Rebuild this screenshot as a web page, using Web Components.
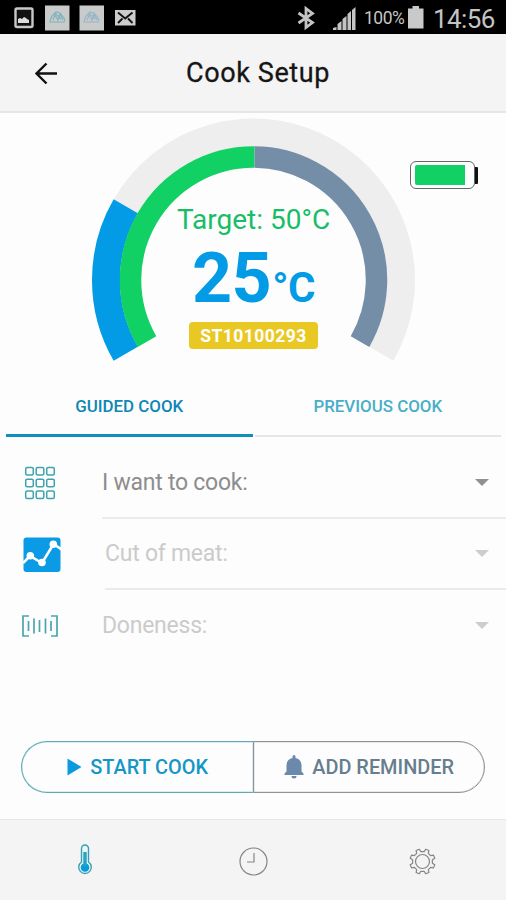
<!DOCTYPE html>
<html lang="en">
<head>
<meta charset="utf-8">
<title>Cook Setup</title>
<style>
  body {
    margin: 0;
    width: 506px;
    height: 900px;
    overflow: hidden;
    background: #fdfdfd;
    font-family: Roboto, "Liberation Sans", sans-serif;
    --blue: #039be5;
    --green: #12d164;
    --slate: #758ea8;
    --bar: #f4f4f4;
  }
</style>
</head>
<body>
<cook-app></cook-app>

<script>
class StatusBar extends HTMLElement {
  constructor() {
    super();
    this.attachShadow({ mode: 'open' });
    this.shadowRoot.innerHTML = `
      <style>
        :host {
          display: flex;
          align-items: flex-start;
          justify-content: space-between;
          height: 34px;
          background: #000;
          color: #c4c4c4;
        }
        svg { display: block; flex: none; }
        .time { font-size: 26px; line-height: 38px; letter-spacing: -0.6px; width: 73px; }
        .percent { font-size: 17.5px; line-height: 36px; width: 43px; letter-spacing: -0.5px; white-space: nowrap; }
        .right { display: flex; }
      </style>
      <svg width="150" height="34" viewBox="0 0 150 34">
        <rect x="15.500" y="8.500" width="17" height="18.500" rx="1.500" fill="#111" stroke="#c8c8c8" stroke-width="2.400"/>
        <path d="M18 23v-4l2-1 2 1 2-2 2 1 1 1 2 1v3z" fill="#ddd"/>
        <rect x="45" y="5.500" width="24.500" height="25" fill="#c9cbcb"/>
        <path d="M49 22h16M50 21l2-5 4-4 4 1 4 5 1 3M53 20l2-5 3 5 2-6 3 6M55 13l6 6" fill="none" stroke="#7fb3bb" stroke-width="1.200"/>
        <rect x="79.500" y="5.500" width="24.500" height="25" fill="#c9cbcb"/>
        <path d="M83 22h16M84 21l2-5 4-4 4 1 4 5 1 3M87 20l2-5 3 5 2-6 3 6M89 13l6 6" fill="none" stroke="#93b5c8" stroke-width="1.200"/>
        <rect x="115" y="10" width="20.500" height="15.500" fill="#ccc"/>
        <path d="M118 12.500l7.200 6 7.300-6M118 23l4.500-4.500M132.500 23l-4.500-4.500" fill="none" stroke="#111" stroke-width="1.900"/>
      </svg>
      <div class="right">
        <svg width="69" height="34" viewBox="296 0 69 34">
          <path d="M299.500 13l14 9.500-6.500 5v-19l6.500 5-14 9.500" fill="none" stroke="#c4c4c4" stroke-width="2.800"/>
          <path d="M334 30v-2l3.500-1v3zM338.500 30v-6l4-3v9zM343.500 30v-11l4-3v14zM348.500 30v-16l3.500-3v19zM353 30v-20l3.500-3v23z" fill="#c4c4c4"/>
        </svg>
        <span class="percent">100%</span>
        <svg width="26" height="34" viewBox="408 0 26 34">
          <path d="M409 8.500h4.500V6h6.500v2.500h4.500v20H409z" fill="#c9c9c9"/>
        </svg>
        <span class="time">14:56</span>
      </div>
    `;
  }
}

class AppHeader extends HTMLElement {
  constructor() {
    super();
    this.attachShadow({ mode: 'open' });
    this.shadowRoot.innerHTML = `
      <style>
        :host {
          display: grid;
          grid-template-columns: 90px 1fr 80px;
          align-items: center;
          height: 79px;
          box-sizing: border-box;
          padding-top: 2px;
          background: var(--bar);
          border-bottom: 2px solid #e6e6e6;
          color: #161616;
        }
        svg { display: block; margin-left: 34px; }
        h1 {
          margin: 0;
          font-size: 27px;
          font-weight: 400;
          letter-spacing: 0.6px;
          line-height: 33px;
          text-align: center;
          -webkit-text-stroke: 0.3px #161616;
        }
      </style>
      <svg width="24" height="24" viewBox="0 0 24 24" fill="none" stroke="#111" stroke-width="2.400">
        <path d="M23 11.500H2.500M12.500 1.500L2.500 11.500l10 10"/>
      </svg>
      <h1><slot></slot></h1>
    `;
  }
}

class TemperatureGauge extends HTMLElement {
  constructor() {
    super();
    this.attachShadow({ mode: 'open' });
  }

  // arc around the centre of the dial, angles in degrees clockwise from the right
  arc(radius, from, to) {
    const point = (deg) => {
      const rad = deg * Math.PI / 180;
      return `${161.5 + radius * Math.cos(rad)} ${162 + radius * Math.sin(rad)}`;
    };
    const large = to - from > 180 ? 1 : 0;
    return `M${point(from)}A${radius} ${radius} 0 ${large} 1 ${point(to)}`;
  }

  connectedCallback() {
    this.shadowRoot.innerHTML = `
      <style>
        :host { display: grid; width: 324px; height: 244px; }
        svg, .info { grid-area: 1 / 1; }
        path { fill: none; }
        .info { display: flex; flex-direction: column; align-items: center; width: 323px; }
        .target { margin-top: 85px; font-size: 28px; line-height: 34px; color: #18bd68; white-space: nowrap; }
        .value { display: flex; align-items: baseline; height: 76px; margin-top: 3px; font-size: 70px; line-height: 76px; font-weight: 700; letter-spacing: -0.5px; color: var(--blue); }
        .value small { font-size: 42px; margin-left: 1px; letter-spacing: -0.5px; }
        .serial {
          width: 129px;
          height: 27px;
          margin-top: 6px;
          border-radius: 4px;
          background: #eac824;
          color: #fff;
          font-size: 17.5px;
          font-weight: 700;
          letter-spacing: 0.45px;
          line-height: 28px;
          text-align: center;
        }
      </style>
      <svg width="324" height="244" viewBox="0 0 324 244">
        <path d="${this.arc(147.5, 210, 390)}" stroke="#eee" stroke-width="28"/>
        <path d="${this.arc(147.5, 150, 210)}" stroke="var(--blue)" stroke-width="28"/>
        <path d="${this.arc(123, 150, 270.5)}" stroke="var(--green)" stroke-width="21.500"/>
        <path d="${this.arc(123, 270.5, 390)}" stroke="var(--slate)" stroke-width="21.500"/>
      </svg>
      <div class="info">
        <div class="target">Target: ${this.getAttribute('target')}°C</div>
        <div class="value">${this.getAttribute('value')}<small>°C</small></div>
        <div class="serial">${this.getAttribute('serial')}</div>
      </div>
    `;
  }
}

class BatteryLevel extends HTMLElement {
  constructor() {
    super();
    this.attachShadow({ mode: 'open' });
    this.shadowRoot.innerHTML = `
      <style>
        :host { display: flex; align-items: center; width: 68px; height: 28px; }
        .case { box-sizing: border-box; width: 65px; height: 28px; padding: 3px 4px; border: 1.5px solid #666; border-radius: 6px; background: #fff; }
        .level { width: 50px; height: 20px; border-radius: 2px 0 0 2px; background: var(--green); }
        .tip { width: 2.500px; height: 17px; background: #111; border-radius: 0 1px 1px 0; }
      </style>
      <div class="case"><div class="level"></div></div>
      <div class="tip"></div>
    `;
  }
}

class CookTab extends HTMLElement {
  constructor() {
    super();
    this.attachShadow({ mode: 'open' });
    this.shadowRoot.innerHTML = `
      <style>
        :host {
          display: flex;
          flex: 1;
          box-sizing: border-box;
          height: 60px;
          align-items: center;
          justify-content: center;
          border-bottom: 2px solid #e6e6e6;
          color: #48aec8;
          font-size: 16.9px;
          font-weight: 500;
          white-space: nowrap;
        }
        :host([active]) { color: #0d87b5; border-bottom: 3px solid #0e8fc0; }
      </style>
      <slot></slot>
    `;
  }
}

class SelectRow extends HTMLElement {
  constructor() {
    super();
    this.attachShadow({ mode: 'open' });
    this.shadowRoot.innerHTML = `
      <style>
        :host {
          display: flex;
          height: 71.5px;
          align-items: stretch;
          color: #8d8d8d;
          --caret: #909090;
        }
        :host([disabled]) { color: #cbcbcb; --caret: #cdcdcd; }
        .icon { width: 80px; display: flex; align-items: center; justify-content: center; }
        .field {
          display: flex;
          flex: 1;
          box-sizing: border-box;
          align-items: center;
          justify-content: space-between;
          margin-left: var(--line-start, 22px);
          padding: 1px 17px 0 0;
          border-bottom: 2px solid #ebebeb;
          font-size: 23px;
          letter-spacing: -0.25px;
        }
        :host([last]) .field { border-bottom-color: transparent; }
        .caret { border: 7px solid transparent; border-top-color: var(--caret); border-bottom: 0; }
      </style>
      <div class="icon"><slot name="icon"></slot></div>
      <div class="field"><slot></slot><span class="caret"></span></div>
    `;
  }
}

class ActionButton extends HTMLElement {
  constructor() {
    super();
    this.attachShadow({ mode: 'open' });
    this.shadowRoot.innerHTML = `
      <style>
        :host {
          display: flex;
          box-sizing: border-box;
          height: 52px;
          align-items: center;
          justify-content: center;
          gap: 8px;
          border: 1.500px solid #8a9499;
          border-radius: 0 26px 26px 0;
          box-shadow: inset 0 0 0 0.5px #8a949966;
          color: #667e8e;
          font-size: 19.9px;
          font-weight: 500;
          white-space: nowrap;
        }
        :host([primary]) {
          border-color: #5dabb4;
          border-right: 0;
          border-radius: 26px 0 0 26px;
          box-shadow: inset 0 0 0 0.5px #5dabb466;
          color: #1497c6;
        }
        span { padding-top: 1px; }
      </style>
      <slot name="icon"></slot><span><slot></slot></span>
    `;
  }
}

class BottomNav extends HTMLElement {
  constructor() {
    super();
    this.attachShadow({ mode: 'open' });
    this.shadowRoot.innerHTML = `
      <style>
        :host {
          display: grid;
          grid-template-columns: repeat(3, 1fr);
          place-items: center;
          box-sizing: border-box;
          height: 81px;
          padding-top: 2px;
          border-top: 1.500px solid #e8e8e8;
          background: var(--bar);
        }
        svg { display: block; }
      </style>
      <svg width="18" height="32" viewBox="0 0 18 32" style="margin: 0 0 3px 2px">
        <path d="M5.500 18V4.500a3.500 3.500 0 0 1 7 0V18a6.300 6.300 0 1 1-7 0z" fill="#e8f6f8" stroke="#3ba0ae" stroke-width="1.400"/>
        <circle cx="9" cy="23.500" r="4.300" fill="#079bdc"/>
        <path d="M9 8v14" stroke="#2ba1c4" stroke-width="3.400"/>
      </svg>
      <svg width="30" height="30" viewBox="0 0 30 30" fill="none" stroke="#858585" stroke-width="1.200">
        <circle cx="15.500" cy="15.500" r="13.500"/>
        <path d="M9 16h7V7"/>
      </svg>
      <svg width="28" height="28" viewBox="-14 -14 28 28" fill="none" stroke="#858585" stroke-width="1.200" stroke-linejoin="round">
        <path class="cog"/>
        <circle cx="0.500" cy="0.500" r="7"/>
      </svg>
    `;
    this.shadowRoot.querySelector('.cog').setAttribute('d', this.cog());
  }

  cog() {
    const teeth = 8;
    const points = [];
    for (let i = 0; i < teeth; i++) {
      [[-0.29, 10], [-0.17, 12.7], [0.17, 12.7], [0.29, 10]].forEach(([offset, r]) => {
        const a = (i + 0.5 + offset) * 2 * Math.PI / teeth;
        points.push(`${(0.5 + r * Math.cos(a)).toFixed(2)} ${(0.5 + r * Math.sin(a)).toFixed(2)}`);
      });
    }
    return `M${points.join('L')}z`;
  }
}

class CookApp extends HTMLElement {
  constructor() {
    super();
    this.attachShadow({ mode: 'open' });
    this.shadowRoot.innerHTML = `
      <style>
        :host { display: flex; flex-direction: column; height: 900px; }
        svg { display: block; }
        .dial { display: grid; grid-template-columns: 92px 324px 1fr; height: 263px; padding-top: 5px; box-sizing: border-box; }
        .dial temperature-gauge { grid-column: 2; }
        .dial battery-level { margin: 43px 0 0 -6px; }
        .tabs { display: flex; gap: 2px; padding: 0 5px 0 6px; margin-top: 1px; }
        .rows { padding-top: 10px; }
        .actions { display: grid; grid-template-columns: 231.5px 232.5px; margin-left: 21.400px; margin-top: 79px; }
        bottom-nav { margin-top: auto; }
        .cut { --line-start: 25px; }
      </style>
      <status-bar></status-bar>
      <app-header>Cook Setup</app-header>
      <section class="dial">
        <temperature-gauge target="50" value="25" serial="ST10100293"></temperature-gauge>
        <battery-level></battery-level>
      </section>
      <nav class="tabs">
        <cook-tab active>GUIDED COOK</cook-tab>
        <cook-tab>PREVIOUS COOK</cook-tab>
      </nav>
      <section class="rows">
        <select-row>
          <svg slot="icon" width="32" height="34" viewBox="0 0 32 34" fill="none" stroke="#3fa3ae" stroke-width="1.500">
            <rect x="1.700" y="1.500" width="7.600" height="7.600" rx="1.500"/><rect x="12.200" y="1.500" width="7.600" height="7.600" rx="1.500"/><rect x="22.700" y="1.500" width="7.600" height="7.600" rx="1.500"/>
            <rect x="1.700" y="13.200" width="7.600" height="7.600" rx="1.500"/><rect x="12.200" y="13.200" width="7.600" height="7.600" rx="1.500"/><rect x="22.700" y="13.200" width="7.600" height="7.600" rx="1.500"/>
            <rect x="1.700" y="25" width="7.600" height="7.600" rx="1.500"/><rect x="12.200" y="25" width="7.600" height="7.600" rx="1.500"/><rect x="22.700" y="25" width="7.600" height="7.600" rx="1.500"/>
          </svg>
          I want to cook:
        </select-row>
        <select-row class="cut" disabled>
          <svg slot="icon" width="38" height="36" viewBox="0 0 38 36" style="margin: 1px 0 0 3px">
            <rect x="0.500" y="0.500" width="37" height="34.500" rx="3" fill="#0b9be6"/>
            <path d="M0 26l7-7 12 7L30.500 7l8 5.500" fill="none" stroke="#fff" stroke-width="2.600"/>
            <g fill="#fff"><circle cx="7.300" cy="18.700" r="3.800"/><circle cx="19" cy="25.500" r="3.800"/><circle cx="30.300" cy="7.300" r="3.800"/></g>
          </svg>
          Cut of meat:
        </select-row>
        <select-row disabled last>
          <svg slot="icon" width="36" height="22" viewBox="0 0 36 22" fill="none" stroke="#4aa5b0" stroke-width="1.700" style="margin-top: 1px">
            <path d="M7 1H1v20h6M29 1h6v20h-6"/>
            <path d="M6.500 6v10M12 3.500v15M17.500 5v12M23.500 3.500v15M29 6v10"/>
          </svg>
          Doneness:
        </select-row>
      </section>
      <section class="actions">
        <action-button primary>
          <svg slot="icon" width="15" height="18" viewBox="0 0 15 18"><path d="M0.500 0.500L14.500 9 0.500 17.500z" fill="#0c9ade"/></svg>
          START COOK
        </action-button>
        <action-button>
          <svg slot="icon" width="20" height="24" viewBox="0 0 20 24" fill="#6b89aa">
            <path d="M8.500 3V1.500a1.500 1.500 0 0 1 3 0V3c3.800.7 6 3.500 6 7.500v6l2 2v1.500H.5v-1.500l2-2v-6C2.500 6.500 4.700 3.700 8.500 3zM7.500 21h5a2.500 2.500 0 0 1-5 0z"/>
          </svg>
          ADD REMINDER
        </action-button>
      </section>
      <bottom-nav></bottom-nav>
    `;
  }
}

customElements.define('status-bar', StatusBar);
customElements.define('app-header', AppHeader);
customElements.define('temperature-gauge', TemperatureGauge);
customElements.define('battery-level', BatteryLevel);
customElements.define('cook-tab', CookTab);
customElements.define('select-row', SelectRow);
customElements.define('action-button', ActionButton);
customElements.define('bottom-nav', BottomNav);
customElements.define('cook-app', CookApp);
</script>
</body>
</html>
